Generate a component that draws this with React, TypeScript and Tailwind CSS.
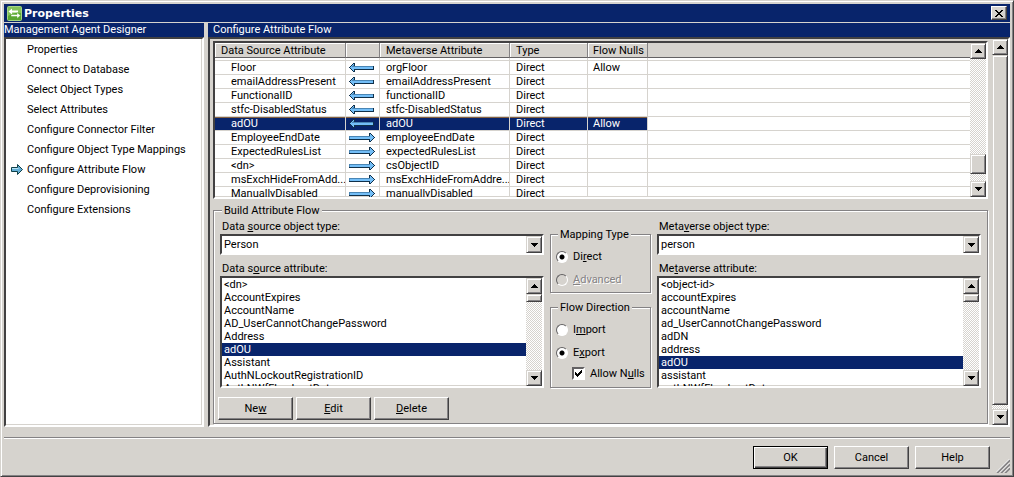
import { useState } from 'react'
import type { ReactNode } from 'react'
import clsx from 'clsx'

const sunken = 'border-2 border-t-[#424142] border-l-[#424142] border-r-white border-b-white shadow-[inset_-1px_-1px_0_#d6d3ce]'
const raised = 'border border-white border-r-[#424142] border-b-[#424142] shadow-[inset_-1px_-1px_0_#848284]'
const scrollPart = 'border border-[#d6d3ce] border-r-[#424142] border-b-[#424142] bg-[#d6d3ce] shadow-[inset_1px_1px_0_#fff,inset_-1px_-1px_0_#848284]'
const group = 'min-w-0 border border-[#848284] shadow-[1px_1px_0_#fff,inset_1px_1px_0_#fff]'

const pages = [
  'Properties',
  'Connect to Database',
  'Select Object Types',
  'Select Attributes',
  'Configure Connector Filter',
  'Configure Object Type Mappings',
  'Configure Attribute Flow',
  'Configure Deprovisioning',
  'Configure Extensions',
]

const flows = [
  { source: 'Floor', dir: 'export', target: 'orgFloor', nulls: 'Allow' },
  { source: 'emailAddressPresent', dir: 'export', target: 'emailAddressPresent', nulls: '' },
  { source: 'FunctionalID', dir: 'export', target: 'functionalID', nulls: '' },
  { source: 'stfc-DisabledStatus', dir: 'export', target: 'stfc-DisabledStatus', nulls: '' },
  { source: 'adOU', dir: 'export', target: 'adOU', nulls: 'Allow' },
  { source: 'EmployeeEndDate', dir: 'import', target: 'employeeEndDate', nulls: '' },
  { source: 'ExpectedRulesList', dir: 'import', target: 'expectedRulesList', nulls: '' },
  { source: '<dn>', dir: 'import', target: 'csObjectID', nulls: '' },
  { source: 'msExchHideFromAdd...', dir: 'import', target: 'msExchHideFromAddre...', nulls: '' },
  { source: 'ManuallyDisabled', dir: 'import', target: 'manuallyDisabled', nulls: '' },
]

const sourceAttributes = [
  '<dn>',
  'AccountExpires',
  'AccountName',
  'AD_UserCannotChangePassword',
  'Address',
  'adOU',
  'Assistant',
  'AuthNLockoutRegistrationID',
  'AuthNWfFlowLastDate',
]

const metaverseAttributes = [
  '<object-id>',
  'accountExpires',
  'accountName',
  'ad_UserCannotChangePassword',
  'adDN',
  'address',
  'adOU',
  'assistant',
  'authNWfFlowLastDate',
]

function Triangle({ up = false }: { up?: boolean }) {
  return (
    <svg width="7" height="4" viewBox="0 0 7 4" shapeRendering="crispEdges">
      <path d={up ? 'M3 0h1v1h1v1h1v1h1v1H0V3h1V2h1V1h1z' : 'M0 0h7v1H6v1H5v1H4v1H3V3H2V2H1V1H0z'} />
    </svg>
  )
}

function FlowArrow({ dir }: { dir: string }) {
  return (
    <svg width="26" height="9" viewBox="0 0 26 9" shapeRendering="crispEdges" className="block">
      {dir === 'export' ? (
        <>
          <path d="M0 4h1V3h1V2h1V1h1V0h2v3h19v4H6v2H4V8H3V7H2V6H1V5H0z" fill="#10304a" />
          <path d="M1 4h1V3h1V2h1V1h1v3h19v2H5v2H4V7H3V6H2V5H1z" fill="#73bef7" />
          <path d="M5 3h19v1H5zM3 3h1v-1h1v2H3z" fill="#4a86b5" />
        </>
      ) : (
        <>
          <path d="M26 4h-1V3h-1V2h-1V1h-1V0h-2v3H0v4h20v2h2V8h1V7h1V6h1V5h1z" fill="#10304a" />
          <path d="M25 4h-1V3h-1V2h-1V1h-1v3H1v2h20v2h1V7h1V6h1V5h1z" fill="#73bef7" />
          <path d="M0 3h21v1H0zM0 4h1v2H0z" fill="#4a86b5" />
        </>
      )}
    </svg>
  )
}

function PageArrow() {
  return (
    <svg width="12" height="11" viewBox="0 0 12 11">
      <path d="M.5 3.5h6v-3l5 5-5 5v-3h-6z" fill="#63aed6" stroke="#10414a" />
      <path d="M1 4.500h6.500" stroke="#b5e3f7" />
    </svg>
  )
}

function AppIcon() {
  return (
    <svg width="15" height="15" viewBox="0 0 15 15">
      <rect x=".5" y=".5" width="14" height="14" rx="1" fill="#5aa632" stroke="#a5d684" />
      <path d="M1 1h13v6C9 6 5 8 1 10z" fill="#84c35a" />
      <path d="M1.500 5.500 5 2.500v2h6v2H5v2z" fill="#fff" />
      <path d="M13.500 9.500 10 6.500v2H4v2h6v2z" fill="#fff" stroke="#5aa632" strokeWidth=".5" />
    </svg>
  )
}

function ScrollBar({ thumb, before, after }: { thumb: string; before: string; after: string }) {
  return (
    <div className="flex w-4 shrink-0 flex-col bg-[repeating-conic-gradient(#fff_0_25%,#d6d3ce_0_50%)] bg-[length:2px_2px]">
      <button aria-label="Scroll up" className={clsx(scrollPart, 'flex h-4 shrink-0 items-center justify-center')}>
        <Triangle up />
      </button>
      <div className={before} />
      <div className={clsx(scrollPart, thumb)} />
      <div className={after} />
      <button aria-label="Scroll down" className={clsx(scrollPart, 'flex h-4 shrink-0 items-center justify-center')}>
        <Triangle />
      </button>
    </div>
  )
}

function PushButton({ children, isDefault = false }: { children: ReactNode; isDefault?: boolean }) {
  return (
    <button
      className={clsx(
        'h-[23px] w-[75px] bg-[#d6d3ce] text-center',
        isDefault ? 'border border-black shadow-[inset_1px_1px_0_#fff,inset_-1px_-1px_0_#424142,inset_-2px_-2px_0_#848284]' : raised,
      )}
    >
      {children}
    </button>
  )
}

function DropDown({ id, value }: { id: string; value: string }) {
  return (
    <div className={clsx(sunken, 'relative flex h-[21px] bg-white')}>
      <select id={id} className="w-full appearance-none bg-white pl-0.5 outline-none" defaultValue={value}>
        <option>{value}</option>
      </select>
      <span className={clsx(scrollPart, 'pointer-events-none absolute inset-y-0 right-0 flex w-4 items-center justify-center')}>
        <Triangle />
      </span>
    </div>
  )
}

function ListBox({ labelId, items, initial }: { labelId: string; items: string[]; initial: string }) {
  const [selected, setSelected] = useState(initial)

  return (
    <div className={clsx(sunken, 'flex h-28 bg-white')}>
      <ul role="listbox" aria-labelledby={labelId} className="min-w-0 flex-1 overflow-hidden">
        {items.map((item) => (
          <li
            key={item}
            role="option"
            aria-selected={item === selected}
            onClick={() => setSelected(item)}
            className={clsx('h-[13px] pl-0.5 whitespace-nowrap', item === selected && 'bg-[#08246b] text-white')}
          >
            {item}
          </li>
        ))}
      </ul>
      <ScrollBar before="h-0" thumb="h-2" after="flex-1" />
    </div>
  )
}

function Radio({ name, checked, disabled, onChange, children }: {
  name: string
  checked: boolean
  disabled?: boolean
  onChange?: () => void
  children: ReactNode
}) {
  return (
    <label className={clsx('flex h-[13px] items-center gap-[5px]', disabled && 'text-[#848284] [text-shadow:1px_1px_0_#fff]')}>
      <input
        type="radio"
        name={name}
        checked={checked}
        disabled={disabled}
        onChange={onChange}
        className={clsx(
          'size-3 shrink-0 appearance-none rounded-full border border-t-[#636163] border-l-[#636163] border-r-white border-b-white',
          'checked:bg-[radial-gradient(circle,#000_2px,transparent_3px)]',
          disabled ? 'bg-[#d6d3ce]' : 'bg-white',
        )}
      />
      <span>{children}</span>
    </label>
  )
}

function FlowTable() {
  const head = 'h-[15px] border-r border-b border-r-[#848284] border-b-[#636163] bg-[#d6d3ce] p-0 text-left font-normal shadow-[inset_1px_1px_0_#fff]'
  const cell = 'h-3.5 border-r border-b border-[#d6d3ce] p-0 whitespace-nowrap overflow-hidden'

  return (
    <div className={clsx(sunken, 'flex h-[158px] bg-white')}>
      <div className="min-w-0 flex-1 overflow-hidden">
        <table className="w-full table-fixed border-separate border-spacing-0">
          <colgroup>
            <col className="w-[131px]" />
            <col className="w-[34px]" />
            <col className="w-[130px]" />
            <col className="w-[78px]" />
            <col className="w-[60px]" />
            <col />
          </colgroup>
          <thead>
            <tr>
              <th className={clsx(head, 'pl-1.5')}>Data Source Attribute</th>
              <th className={head} aria-label="Direction" />
              <th className={clsx(head, 'pl-1.5')}>Metaverse Attribute</th>
              <th className={clsx(head, 'pl-1.5')}>Type</th>
              <th className={clsx(head, 'pl-[5px]')}>Flow Nulls</th>
              <td className="border-b border-[#636163] bg-[#d6d3ce]" />
            </tr>
          </thead>
          <tbody>
            <tr aria-hidden="true">
              {[0, 1, 2, 3, 4].map((n) => (
                <td key={n} className="h-[3px] border-r border-b border-[#d6d3ce] p-0" />
              ))}
              <td className="h-[3px] border-b border-[#d6d3ce] p-0" />
            </tr>
            {flows.map((flow) => {
              const active = flow.source === 'adOU'
              const tint = active && 'bg-[#08246b] text-white shadow-[inset_0_1px_0_#846142]'
              return (
                <tr key={flow.source}>
                  <td className={clsx(cell, 'pl-4', tint)}>{flow.source}</td>
                  <td className={clsx(cell, 'pl-[3px]', tint)}>
                    <FlowArrow dir={flow.dir} />
                  </td>
                  <td className={clsx(cell, 'pl-1.5', tint)}>{flow.target}</td>
                  <td className={clsx(cell, 'pl-1.5', tint)}>Direct</td>
                  <td className={clsx(cell, 'pl-[5px]', tint)}>{flow.nulls}</td>
                  <td className="border-b border-[#d6d3ce] p-0" />
                </tr>
              )
            })}
          </tbody>
        </table>
      </div>
      <ScrollBar before="flex-1" thumb="h-5" after="h-[7px]" />
    </div>
  )
}

function BuildFlow() {
  const [direction, setDirection] = useState('export')
  const [allowNulls, setAllowNulls] = useState(true)

  return (
    <fieldset className={clsx(group, 'mt-[5px] px-1 pb-[3px]')}>
      <legend className="ml-1 h-[13px] bg-[#d6d3ce] px-0.5">Build Attribute Flow</legend>
      <div className="flex gap-1.5 px-0.5 pt-[3px]">
        <div className="min-w-0 flex-1">
          <label htmlFor="source-type" className="mb-px block pl-0.5">Data <u>s</u>ource object type:</label>
          <DropDown id="source-type" value="Person" />
          <div id="source-attribute" className="mt-[7px] mb-px pl-0.5">Data s<u>o</u>urce attribute:</div>
          <ListBox labelId="source-attribute" items={sourceAttributes} initial="adOU" />
        </div>

        <div className="flex w-[101px] flex-col gap-2 pt-2">
          <fieldset className={clsx(group, 'h-[65px] pl-[5px]')}>
            <legend className="ml-0.5 h-[13px] bg-[#d6d3ce] px-0.5">Mapping Type</legend>
            <div className="flex flex-col gap-2.5 pt-[9px]">
              <Radio name="mapping" checked onChange={() => {}}>Di<u>r</u>ect</Radio>
              <Radio name="mapping" checked={false} disabled><u>A</u>dvanced</Radio>
            </div>
          </fieldset>

          <fieldset className={clsx(group, 'h-[87px] pl-[5px]')}>
            <legend className="ml-0.5 h-[13px] bg-[#d6d3ce] px-0.5">Flow Direction</legend>
            <div className="flex flex-col gap-2.5 pt-[9px]">
              <Radio name="direction" checked={direction === 'import'} onChange={() => setDirection('import')}>I<u>m</u>port</Radio>
              <Radio name="direction" checked={direction === 'export'} onChange={() => setDirection('export')}>E<u>x</u>port</Radio>
            </div>
            <label className="mt-2 flex h-[13px] items-center gap-[5px] pl-4 whitespace-nowrap">
              <span className="grid shrink-0">
                <input
                  type="checkbox"
                  checked={allowNulls}
                  onChange={() => setAllowNulls(!allowNulls)}
                  className="col-start-1 row-start-1 size-[13px] appearance-none border-2 border-t-[#636163] border-l-[#636163] border-r-white border-b-white bg-white"
                />
                {allowNulls && (
                  <svg width="13" height="13" viewBox="0 0 13 13" shapeRendering="crispEdges" className="pointer-events-none col-start-1 row-start-1">
                    <path d="M3 5h1v1h1v1h1V6h1V5h1V4h1V3h1v3H9v1H8v1H7v1H6v1H5V9H4V8H3z" />
                  </svg>
                )}
              </span>
              <span>Allow N<u>u</u>lls</span>
            </label>
          </fieldset>
        </div>

        <div className="min-w-0 flex-1">
          <label htmlFor="metaverse-type" className="mb-px block pl-0.5">Meta<u>v</u>erse object type:</label>
          <DropDown id="metaverse-type" value="person" />
          <div id="metaverse-attribute" className="mt-[7px] mb-px pl-0.5">Me<u>t</u>averse attribute:</div>
          <ListBox labelId="metaverse-attribute" items={metaverseAttributes} initial="adOU" />
        </div>
      </div>

      <div className="mt-[9px] flex gap-[3px]">
        <PushButton>Ne<u>w</u></PushButton>
        <PushButton><u>E</u>dit</PushButton>
        <PushButton><u>D</u>elete</PushButton>
      </div>
    </fieldset>
  )
}

export default function App() {
  const [page, setPage] = useState('Configure Attribute Flow')

  return (
    <div className="flex min-h-screen flex-col border border-[#d6d3ce] border-r-[#424142] border-b-[#424142] bg-[#d6d3ce] p-[3px] font-['Roboto','Liberation_Sans',sans-serif] text-[11px] leading-[13px] text-black shadow-[inset_1px_1px_0_#fff,inset_-1px_-1px_0_#848284]">
      {/* Title bar */}
      <header className="flex h-[18px] items-center gap-0.5 bg-[#08246b] pr-[3px] pl-[3px] text-white">
        <AppIcon />
        <h1 className="flex-1 font-['DejaVu_Sans',sans-serif] text-[11px] font-bold">Properties</h1>
        <button aria-label="Close" className={clsx(raised, 'flex h-3.5 w-4 items-center justify-center bg-[#d6d3ce]')}>
          <svg width="8" height="7" viewBox="0 0 8 7" shapeRendering="crispEdges">
            <path d="M0 0h2v1h1v1h2V1h1V0h2v1H7v1H6v1H5v1h1v1h1v1h1v1H6V6H5V5H3v1H2v1H0V6h1V5h1V4h1V3H2V2H1V1H0z" />
          </svg>
        </button>
      </header>

      <div className="mt-px flex flex-1 gap-1">
        {/* Page list */}
        <nav className="flex w-[200px] shrink-0 flex-col">
          <h2 className="h-3.5 bg-[#08246b] text-white">Management Agent Designer</h2>
          <ul className={clsx(sunken, 'flex-1 bg-white')}>
            {pages.map((item) => (
              <li key={item}>
                <button className="flex h-5 w-full items-center pl-[5px] text-left" onClick={() => setPage(item)}>
                  <span className="w-4">{item === page && <PageArrow />}</span>
                  {item}
                </button>
              </li>
            ))}
          </ul>
        </nav>

        {/* Current page */}
        <main className="flex min-w-0 flex-1 flex-col">
          <h2 className="h-3.5 bg-[#08246b] pl-[5px] text-white">Configure Attribute Flow</h2>
          <div className={clsx(sunken, 'flex flex-1')}>
            <div className="min-w-0 flex-1 pt-0.5 pr-1 pb-px pl-[3px]">
              <FlowTable />
              <BuildFlow />
            </div>
            <ScrollBar before="h-0" thumb="flex-1" after="h-1" />
          </div>
        </main>
      </div>

      {/* Dialog buttons */}
      <footer className="mt-2.5 flex h-9 justify-end gap-1.5 border-t border-[#848284] pt-2 shadow-[inset_0_1px_0_#fff]">
        <PushButton isDefault>OK</PushButton>
        <PushButton>Cancel</PushButton>
        <PushButton>Help</PushButton>
        <svg width="14" height="14" viewBox="0 0 14 14" className="self-end">
          <path d="M1 14 14 1M5 14l9-9M9 14l5-5" stroke="#848284" strokeWidth="2" />
          <path d="M0 13.500 13.500 0M4 13.500 13.500 4M8 13.500 13.500 8" stroke="#fff" />
        </svg>
      </footer>
    </div>
  )
}
